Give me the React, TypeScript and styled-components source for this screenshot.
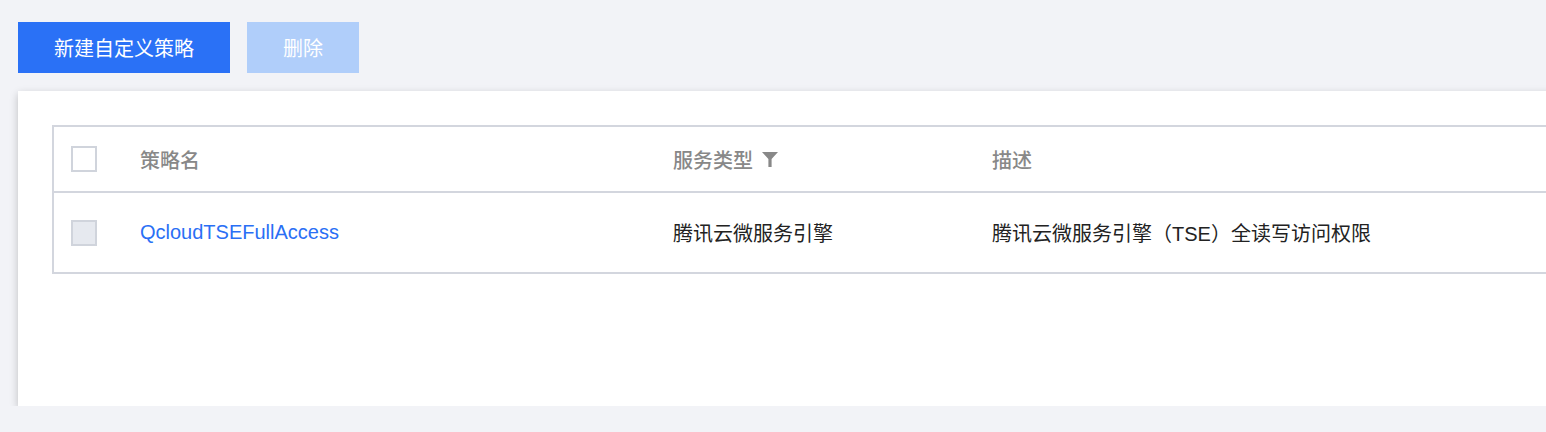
import React from "react";
import styled, { createGlobalStyle } from "styled-components";

const Global = createGlobalStyle`
  html, body {
    margin: 0;
    padding: 0;
    background: #f2f3f7;
    overflow: hidden;
  }
  body {
    font-family: "Liberation Sans", "Noto Sans CJK SC", sans-serif;
  }
`;

const Page = styled.div`
  padding: 22px 0 0 18px;
  width: 1600px;
`;

const Toolbar = styled.div`
  display: flex;
  gap: 17px;
`;

const Button = styled.button<{ $primary?: boolean; $w: number }>`
  width: ${(p) => p.$w}px;
  height: 51px;
  border: none;
  padding: 0;
  font-family: inherit;
  font-size: 20px;
  color: #fff;
  background: ${(p) => (p.$primary ? "#2a71f6" : "#b0cefa")};
  cursor: ${(p) => (p.$primary ? "pointer" : "not-allowed")};
`;

const Card = styled.div`
  margin-top: 18px;
  background: #fff;
  height: 315px;
  box-sizing: border-box;
  padding: 34px 0 0 34px;
  box-shadow: 0 3px 8px rgba(0, 0, 0, 0.22);
`;

const Table = styled.div`
  border: 2px solid #d3d6de;
  border-right: none;
`;

const Row = styled.div<{ $head?: boolean }>`
  display: grid;
  grid-template-columns: 86px 533px 319px 1fr;
  align-items: center;
  height: ${(p) => (p.$head ? 64 : 79)}px;
  border-top: ${(p) => (p.$head ? "none" : "2px solid #d3d6de")};
`;

const CheckCell = styled.div`
  padding-left: 17px;
  display: flex;
  align-items: center;
`;

const Check = styled.span<{ $disabled?: boolean }>`
  display: block;
  width: 26px;
  height: 26px;
  box-sizing: border-box;
  border: 2px solid #d0d4dc;
  background: ${(p) => (p.$disabled ? "#e6e9ef" : "#fff")};
`;

const HeadText = styled.div`
  font-size: 20px;
  color: #888;
  font-weight: 500;
  display: flex;
  align-items: center;
  gap: 9px;
`;

const Cell = styled.div`
  font-size: 20px;
  color: #222;
`;

const Link = styled.a`
  font-size: 20px;
  color: #2a6ff5;
  text-decoration: none;
`;

const Filter = () => (
  <svg width="16" height="15" viewBox="0 0 16 15">
    <path d="M0 0h16L9.6 7V15H6.4V7Z" fill="#888" />
  </svg>
);

export default function App() {
  return (
    <>
      <Global />
      <Page>
        <Toolbar>
          <Button $primary $w={212}>新建自定义策略</Button>
          <Button $w={112}>删除</Button>
        </Toolbar>
        <Card>
          <Table>
            <Row $head>
              <CheckCell><Check /></CheckCell>
              <HeadText>策略名</HeadText>
              <HeadText>服务类型 <Filter /></HeadText>
              <HeadText>描述</HeadText>
            </Row>
            <Row>
              <CheckCell><Check $disabled /></CheckCell>
              <Cell><Link href="#">QcloudTSEFullAccess</Link></Cell>
              <Cell>腾讯云微服务引擎</Cell>
              <Cell>腾讯云微服务引擎（TSE）全读写访问权限</Cell>
            </Row>
          </Table>
        </Card>
      </Page>
    </>
  );
}
